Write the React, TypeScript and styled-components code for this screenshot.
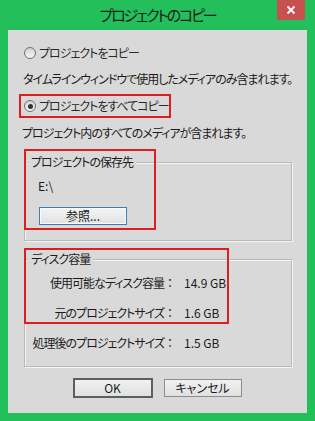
import React from "react";
import styled, { createGlobalStyle } from "styled-components";

const Global = createGlobalStyle`
  html, body { margin: 0; padding: 0; background: #22bf5a; }
  body {
    font-family: "Noto Sans CJK JP", "Noto Sans", sans-serif;
    font-feature-settings: "palt";
    color: #1b1b1b;
  }
  * { box-sizing: border-box; }
`;

const Window = styled.div`
  width: 315px;
  height: 421px;
  background: #22bf5a;
  display: flex;
  flex-direction: column;
  overflow: hidden;
`;

const TitleBar = styled.div`
  position: relative;
  height: 30px;
  display: flex;
  align-items: center;
  justify-content: center;
`;

const Title = styled.div`
  font-size: 15px;
  letter-spacing: -2.2px;
  line-height: 20px;
  color: #1c1c1c;
  padding-bottom: 1px;
`;

const CloseButton = styled.div`
  position: absolute;
  top: 0;
  right: 10px;
  width: 28px;
  height: 20px;
  background: #c75050;
  color: #ffffff;
  display: flex;
  align-items: center;
  justify-content: center;
`;

const Client = styled.div`
  margin: 0 8px;
  height: 383px;
  background: #d9d9d9;
  display: flex;
  flex-direction: column;
  padding-top: 14px;
  font-size: 12px;
`;

const JpText = styled.span`
  letter-spacing: -1px;
  white-space: nowrap;
`;

const RadioRow = styled.div<{ $left: number }>`
  display: flex;
  align-items: center;
  height: 17px;
  margin-left: ${(p) => p.$left}px;
  gap: 3px;
  line-height: 16px;
  color: #2a2a2a;
`;

const RadioCircle = styled.span<{ $checked?: boolean }>`
  width: 12px;
  height: 12px;
  border-radius: 50%;
  border: 1px solid #707070;
  background: linear-gradient(#d2d2d2, #f7f7f7);
  display: flex;
  align-items: center;
  justify-content: center;
  flex: none;
  &::after {
    content: "";
    display: ${(p) => (p.$checked ? "block" : "none")};
    width: 5px;
    height: 5px;
    border-radius: 50%;
    background: #333333;
  }
`;

const Highlight = styled.div`
  margin: 7px 0 0 11px;
  width: 152px;
  height: 24px;
  border: 2px solid #dc1e1e;
  display: flex;
  align-items: center;
  padding-left: 3px;
`;

const Desc = styled.div<{ $top: number; $left: number }>`
  margin: ${(p) => p.$top}px 0 0 ${(p) => p.$left}px;
  line-height: 16px;
  height: 16px;
  white-space: nowrap;
  letter-spacing: -1px;
`;

const GroupWrap = styled.div<{ $top: number }>`
  position: relative;
  margin: ${(p) => p.$top}px 0 0 16px;
  width: 268px;
`;

const Group = styled.fieldset<{ $height: number }>`
  margin: 0;
  padding: 0;
  min-width: 0;
  height: ${(p) => p.$height}px;
  border: 1px solid #b9b9b9;
  box-shadow: 1px 1px 0 #f4f4f4, inset 1px 1px 0 #f4f4f4;
  display: flex;
  flex-direction: column;
`;

const Legend = styled.legend`
  margin-left: 3px;
  padding: 0 3px;
  line-height: 16px;
  font-size: 12px;
  letter-spacing: -1px;
  background: #d9d9d9;
`;

const PathText = styled.div`
  margin: 8px 0 0 13px;
  line-height: 16px;
  height: 16px;
`;

const BrowseButton = styled.button`
  margin: 13px 0 0 14px;
  width: 88px;
  height: 18px;
  padding: 0;
  font: inherit;
  font-size: 12px;
  line-height: 14px;
  color: #1b1b1b;
  border: 1px solid #3c7fb1;
  background: linear-gradient(#f4f4f4, #e1e1e1);
  box-shadow: inset 0 0 0 1px #f8fbfd;
`;

const InfoGrid = styled.div`
  display: grid;
  grid-template-columns: 139px 12px auto;
  grid-auto-rows: 30px;
  align-items: center;
  padding-top: 1px;
  line-height: 16px;
`;

const InfoLabel = styled.span`
  text-align: right;
  white-space: nowrap;
  letter-spacing: -1px;
`;

const Colon = styled.span`
  text-align: center;
`;

const InfoValue = styled.span`
  padding-left: 8px;
  white-space: nowrap;
`;

const Overlay = styled.div<{ $l: number; $t: number; $w: number; $h: number }>`
  position: absolute;
  left: ${(p) => p.$l}px;
  top: ${(p) => p.$t}px;
  width: ${(p) => p.$w}px;
  height: ${(p) => p.$h}px;
  border: 2px solid #dc1e1e;
  pointer-events: none;
`;

const ButtonRow = styled.div`
  margin-top: 11px;
  display: flex;
  justify-content: center;
  align-items: center;
  gap: 11px;
  padding-right: 1px;
`;

const DialogButton = styled.button<{ $default?: boolean }>`
  width: ${(p) => (p.$default ? 80 : 78)}px;
  height: ${(p) => (p.$default ? 20 : 18)}px;
  padding: 0;
  font: inherit;
  font-size: 12px;
  line-height: 14px;
  color: #1b1b1b;
  border: ${(p) => (p.$default ? "2px solid #5e5e5e" : "1px solid #8c8c8c")};
  background: linear-gradient(#f1f1f1, #e0e0e0);
`;

const Times = () => (
  <svg width="10" height="10" viewBox="0 0 10 10">
    <path d="M1.5 1.5 L8.5 8.5 M8.5 1.5 L1.5 8.5" stroke="#fff" strokeWidth="1.8" />
  </svg>
);

export default function App() {
  return (
    <Window>
      <Global />
      <TitleBar>
        <Title>プロジェクトのコピー</Title>
        <CloseButton>
          <Times />
        </CloseButton>
      </TitleBar>
      <Client>
        <RadioRow $left={16}>
          <RadioCircle />
          <JpText>プロジェクトをコピー</JpText>
        </RadioRow>
        <Desc $top={10} $left={15}>
          タイムラインウィンドウで使用したメディアのみ含まれます。
        </Desc>
        <Highlight>
          <RadioRow $left={0}>
            <RadioCircle $checked />
            <JpText>プロジェクトをすべてコピー</JpText>
          </RadioRow>
        </Highlight>
        <Desc $top={7} $left={14}>
          プロジェクト内のすべてのメディアが含まれます。
        </Desc>
        <GroupWrap $top={13}>
          <Group $height={87}>
            <Legend>プロジェクトの保存先</Legend>
            <PathText>E:\</PathText>
            <BrowseButton>参照...</BrowseButton>
          </Group>
          <Overlay $l={0} $t={-5} $w={132} $h={81} />
        </GroupWrap>
        <GroupWrap $top={10}>
          <Group $height={116}>
            <Legend>ディスク容量</Legend>
            <InfoGrid>
              <InfoLabel>使用可能なディスク容量</InfoLabel>
              <Colon>：</Colon>
              <InfoValue>14.9 GB</InfoValue>
              <InfoLabel>元のプロジェクトサイズ</InfoLabel>
              <Colon>：</Colon>
              <InfoValue>1.6 GB</InfoValue>
              <InfoLabel>処理後のプロジェクトサイズ</InfoLabel>
              <Colon>：</Colon>
              <InfoValue>1.5 GB</InfoValue>
            </InfoGrid>
          </Group>
          <Overlay $l={0} $t={-3} $w={205} $h={76} />
        </GroupWrap>
        <ButtonRow>
          <DialogButton $default>OK</DialogButton>
          <DialogButton>キャンセル</DialogButton>
        </ButtonRow>
      </Client>
    </Window>
  );
}
